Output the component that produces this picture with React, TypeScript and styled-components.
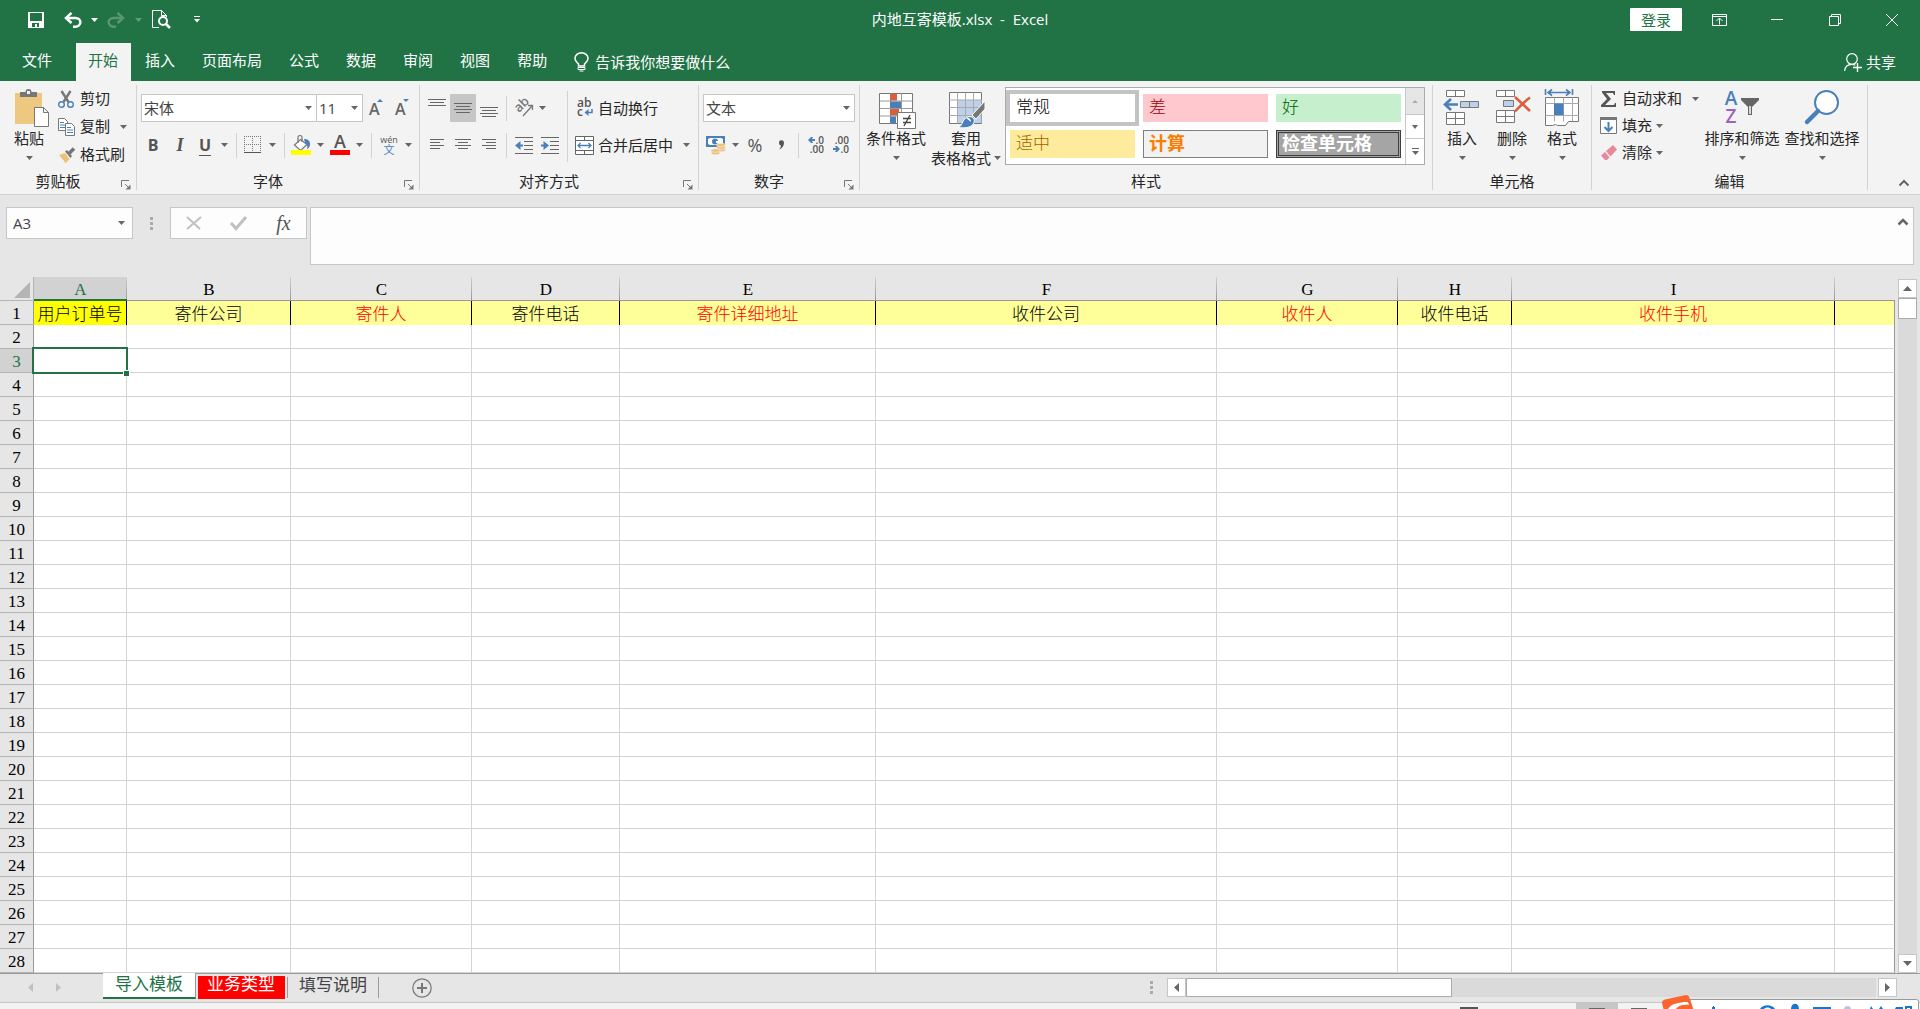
import React from "react";
import styled, { createGlobalStyle, css } from "styled-components";

const UI_FONT = `"Open Sans", "Noto Sans CJK SC", sans-serif`;
const SHEET_FONT = `"Liberation Serif", "Noto Sans CJK SC", serif`;

const c = {
  green: "#217346",
  ribbon: "#f3f3f3",
  chrome: "#e6e6e6",
  line: "#d2d2d2",
  field: "#c6c6c6",
  grid: "#d4d4d4",
  edge: "#999999",
  icon: "#666666",
  text: "#262626",
  blue: "#4a80ba",
};

const GlobalStyle = createGlobalStyle`
  *, *::before, *::after { box-sizing: border-box; }
  body { margin: 0; background: ${c.chrome}; font-family: ${UI_FONT}; font-size: 15px; line-height: 20px; color: ${c.text}; }
  button, input, select, textarea { font: inherit; color: inherit; margin: 0; padding: 0; border: 0; background: none; border-radius: 0; outline: none; }
  button { white-space: nowrap; }
  svg { display: block; flex: none; overflow: visible; }
`;

const Shell = styled.div`
  display: flex;
  flex-direction: column;
  height: 100vh;
  overflow: hidden;
`;

/* ---------- title bar ---------- */

const TitleBar = styled.header`
  display: grid;
  grid-template-columns: 1fr auto 1fr;
  align-items: center;
  height: 43px;
  flex: none;
  padding-bottom: 4px;
  background: ${c.green};
  color: #fff;
`;
const QuickAccess = styled.div`
  display: flex;
  align-items: center;
  padding-left: 16px;
`;
const WindowTitle = styled.h1`
  margin: 0;
  padding-bottom: 2px;
  font-size: 15px;
  font-weight: 400;
  line-height: 20px;
  white-space: pre;
`;
const WindowControls = styled.div`
  display: flex;
  align-items: center;
  justify-content: flex-end;
`;
const PlainButton = styled.button<{ $w: number }>`
  display: flex;
  align-items: center;
  justify-content: center;
  width: ${(p) => p.$w}px;
  height: 28px;
  flex: none;
`;
const SignIn = styled.button`
  width: 52px;
  height: 23px;
  margin-right: 8px;
  border-radius: 1px;
  background: #fff;
  color: ${c.green};
  line-height: 20px;
`;

/* ---------- tab strip ---------- */

const TabStrip = styled.nav`
  display: flex;
  height: 38px;
  flex: none;
  padding-left: 8px;
  background: ${c.green};
  color: #fff;
`;
const RibbonTab = styled.button<{ $active?: boolean; $first?: boolean }>`
  padding: ${(p) => (p.$first ? "0 24px 4px 14px" : p.$active ? "0 13px 4px 12px" : "0 13px 4px 14px")};
  ${(p) => p.$active && css`
    background: ${c.ribbon};
    color: ${c.green};
  `}
`;
const TellMe = styled.button`
  display: flex;
  align-items: center;
  gap: 6px;
  margin-left: 14px;
  padding-bottom: 1px;
`;
const Share = styled.button`
  display: flex;
  align-items: center;
  gap: 4px;
  margin-left: auto;
  padding-right: 24px;
`;

/* ---------- ribbon ---------- */

const Ribbon = styled.section`
  display: flex;
  height: 114px;
  flex: none;
  padding: 4px 0;
  background: ${c.ribbon};
  border-bottom: 1px solid ${c.line};
`;
const Group = styled.div<{ $w: number; $pad?: number }>`
  display: grid;
  grid-template-rows: 1fr 18px;
  flex: 0 0 ${(p) => p.$w}px;
  border-right: 1px solid ${c.line};
  & > :first-child { padding-left: ${(p) => p.$pad ?? 0}px; }
`;
const GroupBody = styled.div`
  display: flex;
  align-items: flex-start;
`;
const GroupFooter = styled.div<{ $launcher?: boolean }>`
  display: grid;
  grid-template-columns: ${(p) => (p.$launcher ? "1fr 20px" : "1fr")};
  align-items: end;
  justify-items: center;
  line-height: 18px;
`;
const Rows = styled.div`
  display: flex;
  flex-direction: column;
  gap: 9px;
  padding-top: 9px;
`;
const Row = styled.div<{ $indent?: number }>`
  display: flex;
  align-items: center;
  height: 28px;
  padding-left: ${(p) => p.$indent ?? 0}px;
`;
const Tool = styled.button<{ $w: number; $on?: boolean }>`
  display: flex;
  align-items: center;
  justify-content: center;
  width: ${(p) => p.$w}px;
  height: 28px;
  flex: none;
  color: #555;
  background: ${(p) => (p.$on ? "#c6c6c6" : "none")};
`;
const Divider = styled.span<{ $w: number; $h?: number }>`
  display: flex;
  justify-content: center;
  flex: 0 0 ${(p) => p.$w}px;
  &::before {
    content: "";
    width: 1px;
    height: ${(p) => p.$h ?? 25}px;
    background: ${c.line};
  }
`;
const TallDivider = styled(Divider)`
  padding-top: 6px;
`;
const Glyph = styled.span<{ $size: number; $bold?: boolean; $italic?: boolean; $under?: boolean }>`
  font-family: ${(p) => (p.$italic ? `"Liberation Serif", serif` : UI_FONT)};
  font-size: ${(p) => p.$size}px;
  line-height: 20px;
  font-weight: ${(p) => (p.$bold ? 700 : 400)};
  font-style: ${(p) => (p.$italic ? "italic" : "normal")};
  border-bottom: ${(p) => (p.$under ? "1px solid #555" : "0")};
`;
const WithLabel = styled.button<{ $h: number; $gap: number }>`
  display: flex;
  align-items: center;
  gap: 4px;
  height: ${(p) => p.$h}px;
  & > svg + span + svg { margin-left: ${(p) => p.$gap}px; }
`;
const SmallColumn = styled.div<{ $w: number; $pad: number }>`
  display: flex;
  flex-direction: column;
  flex: 0 0 ${(p) => p.$w}px;
  padding-left: ${(p) => p.$pad}px;
  span { padding-bottom: 2px; }
`;
const BigTool = styled.button<{ $w: number }>`
  display: grid;
  grid-template-rows: 40px 20px 18px;
  justify-items: center;
  align-items: center;
  width: ${(p) => p.$w}px;
  padding-top: 4px;
  flex: none;
`;
const BigName = styled.span`
  padding-bottom: 2px;
  line-height: 18px;
`;
const BigLine = styled.span`
  display: flex;
  align-items: center;
  gap: 3px;
  line-height: 16px;
`;

const SelectBox = styled.div<{ $w: number; $join?: boolean }>`
  display: grid;
  align-items: center;
  width: ${(p) => p.$w}px;
  height: 28px;
  flex: none;
  margin-left: ${(p) => (p.$join ? -1 : 0)}px;
  border: 1px solid ${c.field};
  background: #fff;
  color: #444;
  & > * { grid-area: 1 / 1; }
  & > svg { justify-self: end; margin-right: 4px; pointer-events: none; }
`;
const BareSelect = styled.select`
  appearance: none;
  width: 100%;
  height: 26px;
  padding-left: 2px;
`;

/* ---------- style gallery ---------- */

const Gallery = styled.div`
  display: flex;
  justify-content: space-between;
  width: 420px;
  height: 78px;
  margin: 2px 0 0 2px;
  border: 1px solid #ababab;
  background: #fff;
`;
const Swatches = styled.div`
  display: grid;
  grid-template-columns: repeat(3, 125px);
  grid-template-rows: repeat(2, 28px);
  gap: 8px;
  padding: 6px 4px;
`;
const Swatch = styled.button<{ $bg: string; $fg: string; $kind?: "selected" | "calc" | "check" }>`
  padding: 0 0 0 6px;
  text-align: left;
  font-family: ${SHEET_FONT};
  font-size: 17px;
  font-weight: 300;
  line-height: 24px;
  background: ${(p) => p.$bg};
  color: ${(p) => p.$fg};
  ${(p) => p.$kind === "selected" && css`box-shadow: 0 0 0 4px #c3c3c3;`}
  ${(p) => p.$kind === "calc" && css`
    border: 1px solid #7f7f7f;
    padding-left: 5px;
    font-size: 18px;
    font-weight: 700;
  `}
  ${(p) => p.$kind === "check" && css`
    border: 3px double #3f3f3f;
    padding-left: 3px;
    line-height: 20px;
    font-size: 18px;
    font-weight: 700;
  `}
`;
const GalleryScroll = styled.div`
  display: grid;
  grid-template-rows: 26px 24px 1fr;
  width: 19px;
  border-left: 1px solid ${c.field};
`;
const GalleryButton = styled.button<{ $off?: boolean }>`
  display: flex;
  align-items: center;
  justify-content: center;
  background: ${(p) => (p.$off ? "#e6e6e6" : "#fff")};
  & + & { border-top: 1px solid ${c.field}; }
`;
const Collapse = styled.button`
  margin-left: auto;
  align-self: flex-end;
  padding: 0 10px 3px;
`;

/* ---------- formula bar ---------- */

const FormulaBar = styled.section`
  display: flex;
  align-items: flex-start;
  height: 82px;
  flex: none;
  padding: 12px 6px 0;
`;
const NameBox = styled.div`
  display: flex;
  align-items: center;
  width: 127px;
  height: 32px;
  border: 1px solid ${c.field};
  background: #fdfdfd;
  color: #444;
`;
const NameInput = styled.input`
  flex: 1;
  min-width: 0;
  padding-left: 6px;
`;
const Grip = styled.span<{ $w: number; $h: number; $push?: boolean }>`
  display: flex;
  align-items: center;
  justify-content: center;
  flex: 0 0 ${(p) => p.$w}px;
  height: ${(p) => p.$h}px;
  margin-left: ${(p) => (p.$push ? "auto" : 0)};
`;
const FxBox = styled.div`
  display: flex;
  align-items: center;
  justify-content: space-around;
  width: 137px;
  height: 32px;
  margin-right: 3px;
  border: 1px solid ${c.field};
  background: #fdfdfd;
`;
const FormulaField = styled.div`
  display: flex;
  flex: 1;
  height: 58px;
  border: 1px solid ${c.field};
  background: #fdfdfd;
`;
const FormulaText = styled.textarea`
  flex: 1;
  padding: 4px;
  resize: none;
`;

/* ---------- worksheet ---------- */

const SheetArea = styled.main`
  display: flex;
  flex: 1;
  min-height: 0;
`;
const GridPane = styled.div`
  flex: 1;
  min-width: 0;
  overflow: hidden;
`;
const Grid = styled.table`
  width: 100%;
  table-layout: fixed;
  border-collapse: separate;
  border-spacing: 0;
  font-family: ${SHEET_FONT};
  font-size: 17px;
  line-height: 20px;
  color: #000;
  tr { height: 24px; }
  th, td { padding: 3px 0 0; font-weight: 400; text-align: center; white-space: nowrap; }
`;
const Corner = styled.th`
  border-right: 1px solid #b4b4b4;
  border-bottom: 1px solid #b4b4b4;
  & > svg { margin: 0 3px 0 auto; }
`;
const ColHead = styled.th<{ $active?: boolean; $last?: boolean }>`
  border-bottom: 1px solid ${(p) => (p.$active ? c.green : c.edge)};
  box-shadow: ${(p) => (p.$active ? `inset 0 -1px 0 ${c.green}` : "none")};
  color: ${(p) => (p.$active ? c.green : "#000")};
  background: ${(p) =>
    p.$last
      ? "none"
      : `linear-gradient(#cfcfcf, ${c.edge}) right / 1px 100% no-repeat ${p.$active ? c.line : "transparent"}`};
`;
const RowHead = styled.th<{ $active?: boolean }>`
  border-right: 1px solid ${c.edge};
  border-bottom: 1px solid #b4b4b4;
  color: ${(p) => (p.$active ? c.green : "#000")};
  background: ${(p) => (p.$active ? c.line : "none")};
`;
const TitleCell = styled.td<{ $bg: string; $red?: boolean; $last?: boolean }>`
  && { font-weight: 300; }
  background: ${(p) => p.$bg};
  color: ${(p) => (p.$red ? "#ff0000" : "#000")};
  border-right: 1px solid ${(p) => (p.$last ? c.edge : "#000")};
`;
const Cell = styled.td<{ $selected?: boolean; $last?: boolean }>`
  background: #fff;
  border-right: 1px solid ${(p) => (p.$last ? c.edge : c.grid)};
  border-bottom: 1px solid ${c.grid};
  ${(p) => p.$selected && css`
    position: relative;
    &::before {
      content: "";
      position: absolute;
      inset: -2px;
      border: 2px solid ${c.green};
    }
    &::after {
      content: "";
      position: absolute;
      right: -4px;
      bottom: -5px;
      width: 7px;
      height: 7px;
      border: 1px solid #fff;
      background: ${c.green};
    }
  `}
`;

const VScroll = styled.div`
  display: flex;
  flex-direction: column;
  width: 19px;
  flex: none;
  margin: 2px 3px 0;
`;
const ScrollButton = styled.button`
  display: flex;
  align-items: center;
  justify-content: center;
  width: 19px;
  height: 19px;
  flex: none;
  border: 1px solid ${c.field};
  background: #fff;
`;
const VTrack = styled.div`
  flex: 1;
  background: #dadada;
`;
const VThumb = styled.div`
  height: 21px;
  border: 1px solid #ababab;
  background: #fff;
`;

/* ---------- bottom bars ---------- */

const SheetBar = styled.footer`
  display: flex;
  height: 29px;
  flex: none;
  box-shadow: inset 0 1px 0 ${c.edge};
`;
const SheetNav = styled.div`
  display: flex;
  align-items: center;
  width: 103px;
  padding-left: 16px;
`;
const SheetTab = styled.button<{ $kind: "active" | "red" | "plain" }>`
  font-size: 17px;
  line-height: 20px;
  overflow: hidden;
  ${(p) => p.$kind === "active" && css`
    height: 26px;
    padding: 1px 12px 3px;
    background: #fff;
    color: ${c.green};
    border-right: 1px solid ${c.edge};
    border-bottom: 2px solid ${c.green};
  `}
  ${(p) => p.$kind === "red" && css`
    height: 23px;
    margin: 3px 2px 0;
    padding: 0 10px 7px 9px;
    line-height: 16px;
    background: #ff0000;
    color: #fff;
  `}
  ${(p) => p.$kind === "plain" && css`
    height: 21px;
    margin-top: 4px;
    padding: 0 11px 5px;
    line-height: 16px;
    color: #444;
    border: solid ${c.edge};
    border-width: 0 1px;
  `}
`;
const AddSheet = styled.button`
  align-self: center;
  margin-left: 33px;
`;
const HScroll = styled.div`
  display: flex;
  align-items: center;
  flex: 0 0 38%;
  height: 29px;
  margin-right: 23px;
`;
const HTrack = styled.div`
  flex: 1;
  height: 19px;
  margin-right: 2px;
  background: #dadada;
`;
const HThumb = styled.div`
  width: 266px;
  height: 19px;
  border: 1px solid #ababab;
  background: #fff;
`;
const StatusBar = styled.div`
  display: flex;
  justify-content: flex-end;
  height: 7px;
  flex: none;
  overflow: hidden;
  padding-right: 260px;
  border-top: 1px solid ${c.field};
  background: ${c.ribbon};
  svg { overflow: hidden; }
`;
const StatusItem = styled.span<{ $w: number; $on?: boolean }>`
  display: flex;
  justify-content: center;
  width: ${(p) => p.$w}px;
  background: ${(p) => (p.$on ? "#c6c6c6" : "none")};
`;
const InputMethodBar = styled.aside`
  position: fixed;
  right: 0;
  bottom: 0;
  svg { overflow: hidden; }
`;

/* ---------- icons ---------- */

const Svg = ({ w, h, children, ...rest }: { w: number; h: number; children: React.ReactNode } & React.SVGProps<SVGSVGElement>) => (
  <svg width={w} height={h} viewBox={`0 0 ${w} ${h}`} fill="none" aria-hidden="true" {...rest}>
    {children}
  </svg>
);
const Caret = ({ color = c.icon }: { color?: string }) => (
  <Svg w={7} h={4}><path d="M0 0h7L3.500 4z" fill={color} /></Svg>
);
const Triangle = ({ dir, color = c.icon }: { dir: "up" | "down" | "left" | "right"; color?: string }) => {
  const d = { up: "M0 7h9L4.500 2z", down: "M0 2h9L4.500 7z", left: "M7 0v9L2 4.500z", right: "M2 0v9L7 4.500z" }[dir];
  return <Svg w={9} h={9}><path d={d} fill={color} /></Svg>;
};
const Dots = () => (
  <Svg w={3} h={13}><path d="M0 0h3v3H0zM0 5h3v3H0zM0 10h3v3H0z" fill="#ababab" /></Svg>
);
const Lines = ({ rows, w = 18, h = 18, color = c.icon }: { rows: [number, number, number][]; w?: number; h?: number; color?: string }) => (
  <Svg w={w} h={h} shapeRendering="crispEdges">
    {rows.map(([x, y, len], i) => <rect key={i} x={x} y={y} width={len} height={1} fill={color} />)}
  </Svg>
);

const SaveIcon = () => (
  <Svg w={16} h={16}><path fillRule="evenodd" fill="#fff" d="M0 0h16v16H0zM2 1v8h12V1zM4 11v4h3v-3h2v3h2v-4z" /></Svg>
);
const UndoIcon = ({ flip }: { flip?: boolean }) => (
  <Svg w={18} h={16}>
    <g transform={flip ? "translate(18 0) scale(-1 1)" : undefined} stroke="#fff" opacity={flip ? 0.25 : 1} strokeWidth="2.500">
      <path d="M2 6h9.500a4.800 4.300 0 0 1 0 8.700H9" />
      <path d="M7.500 .8L2 6l5.500 5" />
    </g>
  </Svg>
);
const PreviewIcon = () => (
  <Svg w={19} h={19}>
    <path d="M7 17.500H.5V.5h9l5 5V7M9.500.5v5h5" stroke="#fff" />
    <circle cx="11" cy="11" r="4" stroke="#fff" strokeWidth="2" />
    <path d="M14 14l4 4" stroke="#fff" strokeWidth="2.500" />
  </Svg>
);
const CustomizeIcon = () => (
  <Svg w={6} h={7}><path d="M0 0h6v1H0zM0 3h6L3 6.500z" fill="#fff" /></Svg>
);
const BulbIcon = () => (
  <Svg w={15} h={20}>
    <path d="M4.500 14v-2C3 10 1 9 1 6.500a6.500 5.800 0 0 1 13 0c0 2.500-2 3.500-3.500 5.500v2z" stroke="#fff" strokeWidth="1.500" />
    <path d="M4 15.500h7v2H4zM5.500 19h4" stroke="#fff" />
  </Svg>
);
const ShareIcon = () => (
  <Svg w={18} h={19}>
    <circle cx="8" cy="6" r="5.300" stroke="#fff" strokeWidth="1.200" />
    <path d="M.6 18c.3-4 3-6.700 7.400-6.700 1.500 0 2.500.4 3.300.9" stroke="#fff" strokeWidth="1.200" />
    <path d="M13.500 10v9M9 14.500h9" stroke="#fff" strokeWidth="1.400" />
  </Svg>
);
const RibbonModeIcon = () => (
  <Svg w={15} h={12}><path d="M.5.5h14v11H.5zM.5 2.500h14M7.500 10.500V4.500M4.500 7l3-3 3 3" stroke="#fff" /></Svg>
);
const MinIcon = () => <Svg w={12} h={12}><path d="M0 5.500h12" stroke="#fff" /></Svg>;
const RestoreIcon = () => (
  <Svg w={12} h={12}><path d="M.5 2.500h9v9h-9zM2.500 2.500v-2h9v9h-2" stroke="#fff" /></Svg>
);
const CloseIcon = () => <Svg w={12} h={12}><path d="M0 0l12 12M12 0L0 12" stroke="#fff" /></Svg>;

const PasteIcon = () => (
  <Svg w={40} h={40}>
    <path d="M6 4h27v31H6z" fill="#eec880" />
    <path d="M11 3h5.500a3 3 0 0 1 6 0H28v5H11z" fill="#777" />
    <rect x="18" y="2" width="3" height="3" fill="#f3f3f3" />
    <path d="M25.500 18.500h9l5 5v14h-14z" fill="#fff" stroke="#777" />
    <path d="M34.500 18.500v5h5" stroke="#777" />
  </Svg>
);
const CutIcon = () => (
  <Svg w={18} h={19}>
    <path d="M3.500 1l7 11M12.500 1l-7 11" stroke="#777" strokeWidth="2.400" />
    <circle cx="3.500" cy="14.500" r="2.800" stroke={c.blue} strokeWidth="1.400" />
    <circle cx="12.500" cy="14.500" r="2.800" stroke={c.blue} strokeWidth="1.400" />
  </Svg>
);
const CopyIcon = () => (
  <Svg w={18} h={19}>
    <path d="M.5.5h6l3 3v9h-9z" fill="#fff" stroke="#777" />
    <path d="M2 4.500h4M2 7h5M2 9.500h5" stroke={c.blue} />
    <path d="M7.500 5.500h6l3 3v9h-9z" fill="#fff" stroke="#777" />
    <path d="M9 9.500h4M9 12h6M9 14.500h6" stroke={c.blue} />
  </Svg>
);
const PainterIcon = () => (
  <Svg w={18} h={18}>
    <path d="M1 9l6-2 4.500 6-4 4.500C6 14 4 13 1 9z" fill="#eec07a" />
    <path d="M7 5.500l2-1.500 5 6-1.500 2z" fill="#777" />
    <path d="M11 7.500l5-5" stroke="#777" strokeWidth="3.500" />
  </Svg>
);
const Launcher = () => (
  <Svg w={10} h={10}>
    <path d="M.5 7V.5H8M4 4l4 4" stroke="#777" />
    <path d="M9.500 4.500v5h-5z" fill="#777" />
  </Svg>
);
const SizedA = ({ up }: { up?: boolean }) => (
  <Svg w={20} h={20}>
    <text x="1" y="17" fontSize="16" fontWeight="600" fill={c.icon} fontFamily="Open Sans, sans-serif">A</text>
    <path d={up ? "M9 4h6l-3-3z" : "M9 1h6l-3 3z"} fill={c.blue} />
  </Svg>
);
const BorderIcon = () => (
  <Svg w={18} h={18} shapeRendering="crispEdges">
    <path d="M.5 0v17M8.500 0v17M16.500 0v17M0 .5h17M0 8.500h17" stroke="#777" strokeDasharray="1 1" />
    <path d="M0 16.500h17" stroke="#555" />
  </Svg>
);
const FillColorIcon = () => (
  <Svg w={20} h={20}>
    <path d="M9.500 4.500l6.500 5-6.500 6-6-5.500z" fill="#fff" stroke="#777" strokeWidth="1.200" />
    <path d="M7 8V2a2 1.500 0 0 1 4 0v5" stroke="#777" strokeWidth="1.200" />
    <path d="M13 4c4 0 6 2 6 5 0 2-1 4-3 5.500 1-3 0-5-2-7z" fill={c.blue} />
    <rect x="0" y="15" width="20" height="5" fill="#ffff00" />
  </Svg>
);
const FontColorIcon = () => (
  <Svg w={20} h={20}>
    <text x="10" y="13" textAnchor="middle" fontSize="18" fontWeight="600" fill="#555" fontFamily="Open Sans, sans-serif">A</text>
    <rect x="0" y="15" width="20" height="5" fill="#ff0000" />
  </Svg>
);
const PinyinIcon = () => (
  <Svg w={20} h={22}>
    <text x="10" y="9" textAnchor="middle" fontSize="9" fill="#555" fontFamily="Open Sans, sans-serif">wén</text>
    <text x="10" y="20" textAnchor="middle" fontSize="11" fill={c.blue} fontFamily="Noto Sans CJK SC, sans-serif">文</text>
  </Svg>
);
const OrientationIcon = () => (
  <Svg w={20} h={20}>
    <text x="0" y="0" transform="translate(5 15) rotate(-45)" fontSize="13" fontWeight="600" fill="#777" fontFamily="Open Sans, sans-serif">ab</text>
    <path d="M9 18L18 8M14 7.500h4.500v4.500" stroke="#777" strokeWidth="1.300" />
  </Svg>
);
const IndentIcon = ({ right }: { right?: boolean }) => (
  <Svg w={18} h={17}>
    <path d="M0 .5h18M9 4.500h9M9 8.500h9M9 12.500h9M0 16.500h18" stroke={c.icon} />
    <g transform={right ? "translate(8 0) scale(-1 1)" : undefined}>
      <path d="M8 8.500H2" stroke={c.blue} strokeWidth="2" />
      <path d="M5.500 4L0 8.500 5.500 13V9z" fill={c.blue} />
    </g>
  </Svg>
);
const WrapIcon = () => (
  <Svg w={19} h={20}>
    <text x="2" y="9" fontSize="12" fill="#555" fontWeight="600" fontFamily="Open Sans, sans-serif">ab</text>
    <text x="2" y="18" fontSize="12" fill="#555" fontWeight="600" fontFamily="Open Sans, sans-serif">c</text>
    <path d="M17 11v3.500h-6" stroke={c.blue} strokeWidth="1.500" />
    <path d="M13.500 11v7L9.500 14.500z" fill={c.blue} />
  </Svg>
);
const MergeIcon = () => (
  <Svg w={19} h={19}>
    <path d="M.5.5h18v18H.5zM.5 4.500h18M.5 14.500h18M9.500.5v4M9.500 14.500v4" fill="#fff" stroke={c.icon} />
    <path d="M3 9.500h13M5.500 7L3 9.500 5.500 12M13.500 7L16 9.500 13.500 12" stroke={c.blue} strokeWidth="1.300" />
  </Svg>
);
const CurrencyIcon = () => (
  <Svg w={20} h={20}>
    <rect x="0" y="1" width="19" height="11" fill={c.blue} />
    <path d="M2 4l2-1h11l2 1v5l-2 1H4L2 9z" fill="#fff" />
    <circle cx="9" cy="6.500" r="3" fill={c.blue} />
    <path d="M10 6h4v2h-4z" fill="#fff" />
    <g fill="#eec07a" stroke="#f3f3f3" strokeWidth=".6">
      <ellipse cx="15" cy="15" rx="4.500" ry="1.800" /><ellipse cx="15" cy="12.500" rx="4.500" ry="1.800" /><ellipse cx="15" cy="10" rx="4.500" ry="1.800" />
      <ellipse cx="9.500" cy="18" rx="4.500" ry="1.800" /><ellipse cx="9.500" cy="15.500" rx="4.500" ry="1.800" />
    </g>
  </Svg>
);
const DecimalIcon = ({ less }: { less?: boolean }) => (
  <Svg w={18} h={20}>
    <text x="17" y="9" textAnchor="end" fontSize="10" fontWeight="600" fill="#555" fontFamily="Open Sans, sans-serif">{less ? ".00" : ".0"}</text>
    <text x="17" y="18" textAnchor="end" fontSize="10" fontWeight="600" fill="#555" fontFamily="Open Sans, sans-serif">{less ? ".0" : ".00"}</text>
    {less
      ? <path d="M1 13h3l-1-2h2l3 3-3 3H3l1-2H1z" fill={c.blue} />
      : <path d="M8 4H5l1-2H4L1 5l3 3h2L5 6h3z" fill={c.blue} />}
  </Svg>
);
const ConditionalIcon = () => (
  <Svg w={40} h={40}>
    <path d="M3.500 4.500h33v30h-33z" fill="#fff" stroke="#777" />
    <path d="M3.500 12h33M3.500 19.500h33M3.500 27h33M14.500 4.500v30M25.500 4.500v30" stroke="#999" />
    <path d="M14 5h7v6.500h-7zM14 20h9v6.500h-9z" fill="#d9603f" />
    <path d="M14 12.500h11V19H14zM14 27.500h6V34h-6z" fill={c.blue} />
    <path d="M21.500 23.500h18v16h-18z" fill="#fff" stroke="#777" />
    <path d="M27 29.500h8M27 33.500h8M34 26l-6 11" stroke="#444" strokeWidth="1.300" />
  </Svg>
);
const TableFormatIcon = () => (
  <Svg w={40} h={40}>
    <path d="M3.500 3.500h32v31h-32z" fill="#fff" stroke="#777" />
    <path d="M11.500 11h24v23h-24z" fill="#bdd2ea" />
    <path d="M3.500 11h32M3.500 18.500h32M3.500 26.500h32M11.500 3.500v31M19.500 3.500v31M27.500 3.500v31" stroke="#aaa" />
    <path d="M39 12v8L30 30l-4-4z" fill="#777" stroke="#fff" />
    <path d="M12 38.500c5-1 4-10 11-11 4 0 6 3 5 6-2 5-8 6-16 5z" fill={c.blue} stroke="#fff" />
    <path d="M20 29c2-1 5 0 5 4z" fill="#fff" />
  </Svg>
);
const InsertIcon = () => (
  <Svg w={40} h={40}>
    <path d="M4.500 1.500h18v6h-18zM13.500 1.500v6M4.500 23.500h18v12h-18zM13.500 23.500v12M4.500 29.500h18" fill="#fff" stroke="#777" />
    <path d="M18.500 12.500h18v6h-18z" fill="#bdd2ea" stroke="#777" /><path d="M27.500 12.500v6" stroke="#777" />
    <path d="M16 15.500H4M9 10l-6 5.500L9 21" stroke={c.blue} strokeWidth="2.600" />
  </Svg>
);
const DeleteIcon = () => (
  <Svg w={40} h={40}>
    <path d="M4.500 1.500h18v6h-18zM13.500 1.500v6M4.500 21.500h18v12h-18zM13.500 21.500v12M4.500 27.500h18" fill="#fff" stroke="#777" />
    <path d="M11.500 11.500h10v6h-10z" fill="#bdd2ea" stroke="#777" />
    <path d="M23 8l15 14M38 8.500C32 13 27 18 23 22.500" stroke="#d9603f" strokeWidth="2.600" />
  </Svg>
);
const FormatIcon = () => (
  <Svg w={40} h={40}>
    <path d="M3.500 0v6M30.500 0v6M7 3.500h20M10 .5l-4 3 4 3M24 .5l4 3-4 3" stroke={c.blue} strokeWidth="1.600" />
    <path d="M3.500 8.500h33v24h-10l-3 4h-8l-2-1-3 1h-7z" fill="#fff" stroke="#777" />
    <path d="M3.500 14.500h33M3.500 26.500h33M12.500 8.500v24M21.500 8.500v24M30.500 8.500v24" stroke="#aaa" />
    <path d="M12 14.500h9.500V26H12z" fill={c.blue} />
  </Svg>
);
const SigmaIcon = () => (
  <Svg w={18} h={18}><path d="M2 1h13v4h-1l-1-2H6l5 6-6 6h9l1-2h1v4H1v-2l6-6L2 2.500z" fill="#555" /></Svg>
);
const FillIcon = () => (
  <Svg w={18} h={18}>
    <path d="M.5.5h16v16H.5z" fill="#fff" stroke="#777" /><path d="M0 0h17v3H0z" fill="#777" />
    <path d="M8.500 5v9M4.500 10l4 4 4-4" stroke={c.blue} strokeWidth="2" />
  </Svg>
);
const EraserIcon = () => (
  <Svg w={18} h={18}>
    <path d="M6 7l7-6 4 4.500-6.500 7z" fill="#e8899a" /><path d="M5 8l4.500 5.500L7 16H5l-4-4.500z" fill="#e8899a" />
  </Svg>
);
const SortFilterIcon = () => (
  <Svg w={40} h={40}>
    <text x="9" y="16" textAnchor="middle" fontSize="19" fontWeight="600" fill={c.blue} fontFamily="Open Sans, sans-serif">A</text>
    <text x="9" y="34" textAnchor="middle" fontSize="19" fontWeight="600" fill="#9a63bd" fontFamily="Open Sans, sans-serif">Z</text>
    <path d="M19 9h18v2l-7 7v8h-4v-8l-7-7z" fill="#666" />
    <path d="M28 17v8" stroke="#fff" strokeWidth="1.500" />
  </Svg>
);
const FindIcon = () => (
  <Svg w={40} h={40}>
    <circle cx="24.500" cy="13.500" r="11.500" fill="#fff" stroke={c.blue} strokeWidth="2" />
    <path d="M16 22L5 33" stroke={c.blue} strokeWidth="4.500" strokeLinecap="round" />
  </Svg>
);
const ChevronUp = ({ bold }: { bold?: boolean }) => (
  <Svg w={12} h={8}><path d="M1.500 6.500L6 2l4.500 4.500" stroke="#666" strokeWidth={bold ? 2.500 : 2} /></Svg>
);

/* ---------- data ---------- */

const tabs = ["文件", "开始", "插入", "页面布局", "公式", "数据", "审阅", "视图", "帮助"];

const swatches: { name: string; bg: string; fg: string; kind?: "selected" | "calc" | "check" }[] = [
  { name: "常规", bg: "#ffffff", fg: "#000000", kind: "selected" },
  { name: "差", bg: "#ffc7ce", fg: "#9c0006" },
  { name: "好", bg: "#c6efce", fg: "#006100" },
  { name: "适中", bg: "#ffeb9c", fg: "#9c6500" },
  { name: "计算", bg: "#f2f2f2", fg: "#fa7d00", kind: "calc" },
  { name: "检查单元格", bg: "#a5a5a5", fg: "#ffffff", kind: "check" },
];

const columns: { id: string; width?: number; title: string; red?: boolean }[] = [
  { id: "A", width: 93, title: "用户订单号" },
  { id: "B", width: 164, title: "寄件公司" },
  { id: "C", width: 181, title: "寄件人", red: true },
  { id: "D", width: 148, title: "寄件电话" },
  { id: "E", width: 256, title: "寄件详细地址", red: true },
  { id: "F", width: 341, title: "收件公司" },
  { id: "G", width: 181, title: "收件人", red: true },
  { id: "H", width: 114, title: "收件电话" },
  { id: "I", width: 323, title: "收件手机", red: true },
  { id: "", title: "" },
];
const bodyRows = Array.from({ length: 27 }, (_, i) => i + 2);

/* ---------- composed parts ---------- */

const Footer = ({ name, launcher }: { name: string; launcher?: boolean }) => (
  <GroupFooter $launcher={launcher}>
    <span>{name}</span>
    {launcher && <button aria-label={`${name}设置`}><Launcher /></button>}
  </GroupFooter>
);
const Select = ({ label, value, w, join }: { label: string; value: string; w: number; join?: boolean }) => (
  <SelectBox $w={w} $join={join}>
    <BareSelect aria-label={label} defaultValue={value}><option>{value}</option></BareSelect>
    <Caret />
  </SelectBox>
);
const More = ({ w, label }: { w: number; label: string }) => (
  <Tool $w={w} aria-label={`${label}选项`}><Caret /></Tool>
);
const Small = ({ icon, text, h, gap }: { icon: React.ReactNode; text: string; h: number; gap?: number }) => (
  <WithLabel $h={h} $gap={gap ?? 0}>{icon}<span>{text}</span>{gap !== undefined && <Caret />}</WithLabel>
);
const Big = ({ icon, text, second, w }: { icon: React.ReactNode; text: string; second?: string; w: number }) => (
  <BigTool $w={w}>{icon}<BigName>{text}</BigName><BigLine>{second}<Caret /></BigLine></BigTool>
);

export default function App() {
  return (
    <Shell>
      <GlobalStyle />
      <TitleBar>
        <QuickAccess>
          <PlainButton $w={40} aria-label="保存"><SaveIcon /></PlainButton>
          <PlainButton $w={34} aria-label="撤消"><UndoIcon /></PlainButton>
          <PlainButton $w={8} aria-label="撤消选项"><Caret color="#fff" /></PlainButton>
          <PlainButton $w={36} aria-label="恢复"><UndoIcon flip /></PlainButton>
          <PlainButton $w={8} aria-label="恢复选项"><Caret color="#5f9a7a" /></PlainButton>
          <PlainButton $w={38} aria-label="打印预览"><PreviewIcon /></PlainButton>
          <PlainButton $w={34} aria-label="自定义快速访问工具栏"><CustomizeIcon /></PlainButton>
        </QuickAccess>
        <WindowTitle>{"内地互寄模板.xlsx  -  Excel"}</WindowTitle>
        <WindowControls>
          <SignIn>登录</SignIn>
          <PlainButton $w={58} aria-label="功能区显示选项"><RibbonModeIcon /></PlainButton>
          <PlainButton $w={58} aria-label="最小化"><MinIcon /></PlainButton>
          <PlainButton $w={57} aria-label="向下还原"><RestoreIcon /></PlainButton>
          <PlainButton $w={57} aria-label="关闭"><CloseIcon /></PlainButton>
        </WindowControls>
      </TitleBar>

      <TabStrip>
        {tabs.map((t, i) => <RibbonTab key={t} $first={i === 0} $active={i === 1}>{t}</RibbonTab>)}
        <TellMe><BulbIcon />告诉我你想要做什么</TellMe>
        <Share><ShareIcon />共享</Share>
      </TabStrip>

      <Ribbon>
        <Group $w={137}>
          <GroupBody>
            <Big w={58} icon={<PasteIcon />} text="粘贴" />
            <SmallColumn $w={78} $pad={0}>
              <Small h={28} icon={<CutIcon />} text="剪切" />
              <Small h={28} icon={<CopyIcon />} text="复制" gap={6} />
              <Small h={28} icon={<PainterIcon />} text="格式刷" />
            </SmallColumn>
          </GroupBody>
          <Footer name="剪贴板" launcher />
        </Group>

        <Group $w={283}>
          <Rows>
            <Row $indent={4}>
              <Select label="字体" value="宋体" w={176} />
              <Select label="字号" value="11" w={47} join />
              <Tool $w={30} aria-label="增大字号"><SizedA up /></Tool>
              <Tool $w={22} aria-label="减小字号"><SizedA /></Tool>
            </Row>
            <Row $indent={2}>
              <Tool $w={28} aria-label="加粗"><Glyph $size={16} $bold>B</Glyph></Tool>
              <Tool $w={26} aria-label="倾斜"><Glyph $size={18} $bold $italic>I</Glyph></Tool>
              <Tool $w={24} aria-label="下划线"><Glyph $size={16} $bold $under>U</Glyph></Tool>
              <More w={14} label="下划线" />
              <Divider $w={10} />
              <Tool $w={24} aria-label="边框"><BorderIcon /></Tool>
              <More w={14} label="边框" />
              <Divider $w={10} />
              <Tool $w={24} aria-label="填充颜色"><FillColorIcon /></Tool>
              <More w={14} label="填充颜色" />
              <Tool $w={26} aria-label="字体颜色"><FontColorIcon /></Tool>
              <More w={12} label="字体颜色" />
              <Divider $w={12} />
              <Tool $w={24} aria-label="拼音"><PinyinIcon /></Tool>
              <More w={14} label="拼音" />
            </Row>
          </Rows>
          <Footer name="字体" launcher />
        </Group>

        <Group $w={279} $pad={4}>
          <GroupBody>
            <Rows>
              <Row>
                <Tool $w={26} aria-label="顶端对齐"><Lines rows={[[0, 0, 18], [2, 3, 14], [0, 6, 18]]} /></Tool>
                <Tool $w={26} $on aria-label="垂直居中"><Lines rows={[[0, 4, 18], [2, 7, 14], [0, 10, 18], [2, 13, 14]]} /></Tool>
                <Tool $w={26} aria-label="底端对齐"><Lines rows={[[0, 8, 18], [2, 11, 14], [0, 14, 18], [2, 17, 14]]} /></Tool>
                <Divider $w={9} />
                <Tool $w={26} aria-label="方向"><OrientationIcon /></Tool>
                <More w={10} label="方向" />
              </Row>
              <Row>
                <Tool $w={26} aria-label="左对齐"><Lines w={14} rows={[[0, 3, 14], [0, 6, 10], [0, 9, 14], [0, 12, 10]]} /></Tool>
                <Tool $w={26} aria-label="居中"><Lines w={16} rows={[[0, 3, 16], [3, 6, 10], [0, 9, 16], [3, 12, 10]]} /></Tool>
                <Tool $w={26} aria-label="右对齐"><Lines w={14} rows={[[0, 3, 14], [4, 6, 10], [0, 9, 14], [4, 12, 10]]} /></Tool>
                <Divider $w={9} />
                <Tool $w={26} aria-label="减少缩进量"><IndentIcon /></Tool>
                <Tool $w={26} aria-label="增加缩进量"><IndentIcon right /></Tool>
              </Row>
            </Rows>
            <TallDivider $w={9} $h={71} />
            <Rows>
              <Row $indent={3}><Small h={28} icon={<WrapIcon />} text="自动换行" /></Row>
              <Row $indent={3}><Small h={28} icon={<MergeIcon />} text="合并后居中" gap={6} /></Row>
            </Rows>
          </GroupBody>
          <Footer name="对齐方式" launcher />
        </Group>

        <Group $w={161} $pad={4}>
          <Rows>
            <Row><Select label="数字格式" value="文本" w={152} /></Row>
            <Row>
              <Tool $w={26} aria-label="会计数字格式"><CurrencyIcon /></Tool>
              <More w={12} label="会计数字格式" />
              <Tool $w={28} aria-label="百分比样式"><Glyph $size={18}>%</Glyph></Tool>
              <Tool $w={24} aria-label="千位分隔样式">
                <Svg w={6} h={10}><path d="M1 3a2.500 2.500 0 0 1 5-.5C6 6 4 8.500 1 9.500c1-1 2-2.500 2-4A2.500 2.500 0 0 1 1 3z" fill="#555" /></Svg>
              </Tool>
              <Divider $w={10} />
              <Tool $w={26} aria-label="增加小数位数"><DecimalIcon /></Tool>
              <Tool $w={24} aria-label="减少小数位数"><DecimalIcon less /></Tool>
            </Row>
          </Rows>
          <Footer name="数字" launcher />
        </Group>

        <Group $w={573} $pad={3}>
          <GroupBody>
            <Big w={66} icon={<ConditionalIcon />} text="条件格式" />
            <Big w={74} icon={<TableFormatIcon />} text="套用" second="表格格式" />
            <Gallery>
              <Swatches>
                {swatches.map((s) => <Swatch key={s.name} $bg={s.bg} $fg={s.fg} $kind={s.kind}>{s.name}</Swatch>)}
              </Swatches>
              <GalleryScroll>
                <GalleryButton $off aria-label="上一行样式"><Svg w={6} h={3}><path d="M0 3h6L3 0z" fill="#ababab" /></Svg></GalleryButton>
                <GalleryButton aria-label="下一行样式"><Svg w={6} h={4}><path d="M0 0h6L3 4z" fill="#666" /></Svg></GalleryButton>
                <GalleryButton aria-label="其他样式"><Svg w={7} h={7}><path d="M0 0h7v1H0zM0 3h7L3.500 7z" fill="#666" /></Svg></GalleryButton>
              </GalleryScroll>
            </Gallery>
          </GroupBody>
          <Footer name="样式" />
        </Group>

        <Group $w={159} $pad={4}>
          <GroupBody>
            <Big w={50} icon={<InsertIcon />} text="插入" />
            <Big w={50} icon={<DeleteIcon />} text="删除" />
            <Big w={50} icon={<FormatIcon />} text="格式" />
          </GroupBody>
          <Footer name="单元格" />
        </Group>

        <Group $w={276}>
          <GroupBody>
            <SmallColumn $w={110} $pad={8}>
              <Small h={27} icon={<SigmaIcon />} text="自动求和" gap={6} />
              <Small h={27} icon={<FillIcon />} text="填充" gap={0} />
              <Small h={27} icon={<EraserIcon />} text="清除" gap={0} />
            </SmallColumn>
            <Big w={80} icon={<SortFilterIcon />} text="排序和筛选" />
            <Big w={80} icon={<FindIcon />} text="查找和选择" />
          </GroupBody>
          <Footer name="编辑" />
        </Group>
        <Collapse aria-label="折叠功能区"><ChevronUp /></Collapse>
      </Ribbon>

      <FormulaBar>
        <NameBox>
          <NameInput aria-label="名称框" defaultValue="A3" />
          <Tool $w={22} aria-label="名称列表"><Caret /></Tool>
        </NameBox>
        <Grip $w={37} $h={32}><Dots /></Grip>
        <FxBox>
          <Tool $w={30} aria-label="取消"><Svg w={16} h={14}><path d="M1 1l13 12M15 1L1 13" stroke="#c0c0c0" strokeWidth="2" /></Svg></Tool>
          <Tool $w={30} aria-label="输入"><Svg w={17} h={14}><path d="M1 7l5 5.500L16 1" stroke="#c0c0c0" strokeWidth="3" /></Svg></Tool>
          <Tool $w={30} aria-label="插入函数"><Glyph $size={20} $italic>fx</Glyph></Tool>
        </FxBox>
        <FormulaField>
          <FormulaText aria-label="编辑栏" />
          <Tool $w={20} aria-label="折叠编辑栏"><ChevronUp bold /></Tool>
        </FormulaField>
      </FormulaBar>

      <SheetArea>
        <GridPane>
          <Grid>
            <colgroup>
              <col width={34} />
              {columns.map((col) => <col key={col.id} width={col.width} />)}
            </colgroup>
            <thead>
              <tr>
                <Corner aria-label="全选"><Svg w={16} h={16}><path d="M16 0v16H0z" fill="#b4b4b4" /></Svg></Corner>
                {columns.map((col, i) => (
                  <ColHead key={col.id} scope="col" $active={i === 0} $last={!col.width}>{col.id}</ColHead>
                ))}
              </tr>
            </thead>
            <tbody>
              <tr>
                <RowHead scope="row">1</RowHead>
                {columns.map((col, i) => (
                  <TitleCell key={col.id} $bg={i === 0 ? "#ffff00" : "#ffff99"} $red={col.red} $last={!col.width}>{col.title}</TitleCell>
                ))}
              </tr>
              {bodyRows.map((n) => (
                <tr key={n}>
                  <RowHead scope="row" $active={n === 3}>{n}</RowHead>
                  {columns.map((col) => (
                    <Cell key={col.id} $selected={n === 3 && col.id === "A"} $last={!col.width} />
                  ))}
                </tr>
              ))}
            </tbody>
          </Grid>
        </GridPane>
        <VScroll>
          <ScrollButton aria-label="向上滚动"><Triangle dir="up" /></ScrollButton>
          <VTrack><VThumb /></VTrack>
          <ScrollButton aria-label="向下滚动"><Triangle dir="down" /></ScrollButton>
        </VScroll>
      </SheetArea>

      <SheetBar>
        <SheetNav>
          <PlainButton $w={28} aria-label="上一个工作表"><Triangle dir="left" color="#c0c0c0" /></PlainButton>
          <PlainButton $w={28} aria-label="下一个工作表"><Triangle dir="right" color="#c0c0c0" /></PlainButton>
        </SheetNav>
        <SheetTab $kind="active">导入模板</SheetTab>
        <SheetTab $kind="red">业务类型</SheetTab>
        <SheetTab $kind="plain">填写说明</SheetTab>
        <AddSheet aria-label="新工作表">
          <Svg w={20} h={20}><circle cx="10" cy="10" r="9.200" stroke="#777" strokeWidth="1.200" /><path d="M10 5v10M5 10h10" stroke="#777" strokeWidth="2" /></Svg>
        </AddSheet>
        <Grip $w={32} $h={29} $push><Dots /></Grip>
        <HScroll>
          <ScrollButton aria-label="向左滚动"><Triangle dir="left" /></ScrollButton>
          <HTrack><HThumb /></HTrack>
          <ScrollButton aria-label="向右滚动"><Triangle dir="right" /></ScrollButton>
        </HScroll>
      </SheetBar>

      <StatusBar>
        <StatusItem $w={106}><Lines w={106} h={6} rows={[[0, 4, 18], [0, 5, 18]]} color="#555" /></StatusItem>
        <StatusItem $w={10} />
        <StatusItem $w={42} $on><Lines w={16} h={6} rows={[[0, 5, 16]]} /></StatusItem>
        <StatusItem $w={42}><Lines w={16} h={6} rows={[[0, 5, 16]]} /></StatusItem>
      </StatusBar>
      <InputMethodBar aria-label="输入法">
        <Svg w={260} h={14}>
          <path d="M30 4.500h226.500a2 2 0 0 1 2 2V16H30z" fill="#fff" stroke="#999" />
          <path d="M2 8c0-2 1-3 3-3.500L26 0c2 0 3 1 3.500 3L34 16H4z" fill="#fa6530" />
          <path d="M8 14c3-5 10-7 20-7l1 3c-7-1-11 1-13 4z" fill="#fff" />
          <g fill="#1b75cc">
            <path d="M53 11h1v1h1v2h-3v-2h1zM100 14c3-5 12-5 15 0h-4c-2-2-5-2-7 0zM131 14c0-7 8-7 8 0zM153 12h18v2h-18zM211 11l2 3h-3zM221 11l2 3h-4zM236 12h7v2h-8zM245 11h7v3h-2v-1h-3v1h-2z" />
            <path d="M184 14c0-4 7-4 7 0z" fill="#b8c4dc" />
          </g>
        </Svg>
      </InputMethodBar>
    </Shell>
  );
}
